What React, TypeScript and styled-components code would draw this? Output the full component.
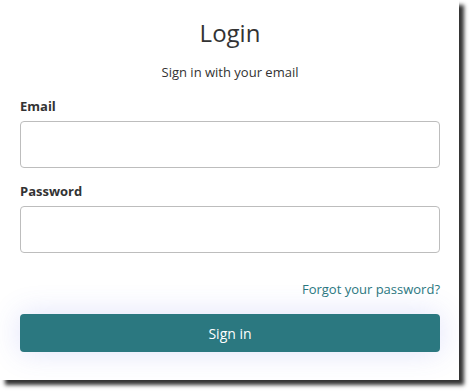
import React from "react";
import styled, { createGlobalStyle } from "styled-components";

const Global = createGlobalStyle`
  html, body { margin: 0; padding: 0; background: #ffffff; }
  html, body, #root { min-height: 391px; }
  body { font-family: "Open Sans", "Noto Sans", sans-serif; color: #333333; }
  * { box-sizing: border-box; }
`;

const Card = styled.div`
  width: 459px;
  height: 380px;
  background: #ffffff;
  box-shadow: 5px 5px 4px rgba(0, 0, 0, 0.8);
  padding: 0 19px 0 20px;
  display: flex;
  flex-direction: column;
`;

const Title = styled.h1`
  margin: 16px 0 0;
  font-size: 24px;
  font-weight: 400;
  line-height: 33px;
  text-align: center;
  color: #333333;
`;

const Subtitle = styled.p`
  margin: 14px 0 0;
  font-size: 13px;
  line-height: 18px;
  text-align: center;
  color: #333333;
`;

const Field = styled.div<{ $top: number }>`
  display: flex;
  flex-direction: column;
  margin-top: ${(p) => p.$top}px;
`;

const Label = styled.label`
  font-size: 13px;
  font-weight: 700;
  line-height: 18px;
  color: #333333;
  margin-bottom: 6px;
`;

const Input = styled.input`
  width: 100%;
  height: 47px;
  border: 1px solid #bdbdbd;
  border-radius: 4px;
  background: #ffffff;
  padding: 0 10px;
  font: inherit;
  outline: none;
`;

const LinkRow = styled.div`
  display: flex;
  justify-content: flex-end;
  margin-top: 27px;
`;

const Link = styled.a`
  font-size: 13px;
  line-height: 18px;
  color: #2b7880;
  text-decoration: none;
`;

const Button = styled.button`
  margin-top: 16px;
  height: 38px;
  width: 100%;
  border: none;
  border-radius: 4px;
  background: #2b7880;
  color: #ffffff;
  font-family: inherit;
  font-size: 14px;
  box-shadow: 0 0 30px rgba(80, 90, 230, 0.18);
`;

export default function App() {
  return (
    <>
      <Global />
      <Card>
        <Title>Login</Title>
        <Subtitle>Sign in with your email</Subtitle>
        <Field $top={16}>
          <Label>Email</Label>
          <Input type="email" />
        </Field>
        <Field $top={14}>
          <Label>Password</Label>
          <Input type="password" />
        </Field>
        <LinkRow>
          <Link href="#">Forgot your password?</Link>
        </LinkRow>
        <Button>Sign in</Button>
      </Card>
    </>
  );
}
